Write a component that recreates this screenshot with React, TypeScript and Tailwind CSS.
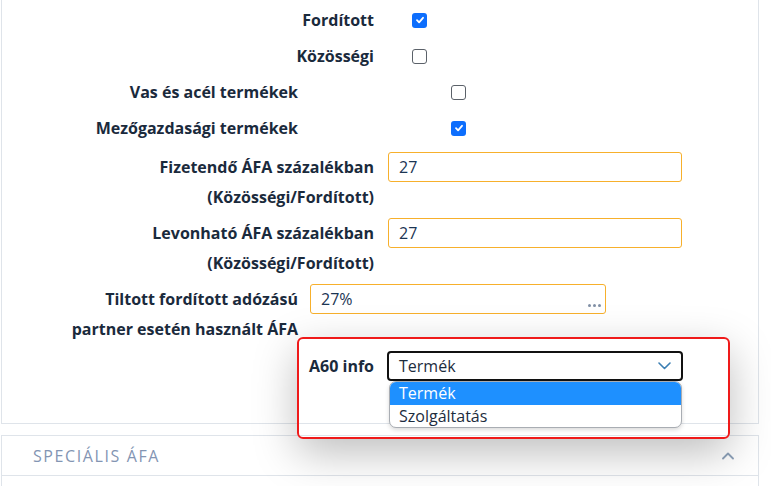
import React from 'react'

const font = { fontFamily: "'Open Sans', 'Noto Sans', sans-serif" }

function Check({ on }: { on: boolean }) {
  if (on) {
    return (
      <span className="w-[15px] h-[15px] rounded-[3px] bg-[#0d6efd] flex items-center justify-center">
        <svg width="10" height="10" viewBox="0 0 10 10" fill="none">
          <path d="M2 5.2 L4.1 7.3 L8 2.8" stroke="white" strokeWidth="1.8" strokeLinecap="round" strokeLinejoin="round" />
        </svg>
      </span>
    )
  }
  return <span className="block w-[15px] h-[15px] rounded-[3px] border border-[#5b6169] bg-white" />
}

function CheckRow({ label, on, wide }: { label: string; on: boolean; wide: boolean }) {
  return (
    <div className="flex items-center h-[36px]">
      <div className={`${wide ? 'w-[372px]' : 'w-[296px]'} text-right text-[16px] font-bold text-[#1a2a3c] leading-[30px]`}>{label}</div>
      <div className={wide ? 'ml-[38px]' : 'ml-[153px]'}>
        <Check on={on} />
      </div>
    </div>
  )
}

function InputRow({ lines, value, wide, dots }: { lines: string[]; value: string; wide: boolean; dots?: boolean }) {
  return (
    <div className="flex items-start">
      <div className={`${wide ? 'w-[372px]' : 'w-[296px]'} text-right text-[16px] font-bold text-[#1a2a3c] leading-[30px]`}>
        {lines.map(l => (
          <div key={l}>{l}</div>
        ))}
      </div>
      <div className={`${wide ? 'ml-[14px] w-[294px]' : 'ml-[12px] w-[296px]'} h-[30px] border border-[#f7b02c] rounded-[3px] flex items-center px-[10px] relative`}>
        <span className="text-[16px] text-[#1b3553]">{value}</span>
        {dots && (
          <span className="absolute right-[4px] bottom-[6px] flex gap-[2px]">
            <span className="w-[3px] h-[3px] rounded-full bg-[#8190a6]" />
            <span className="w-[3px] h-[3px] rounded-full bg-[#8190a6]" />
            <span className="w-[3px] h-[3px] rounded-full bg-[#8190a6]" />
          </span>
        )}
      </div>
    </div>
  )
}

export default function App() {
  return (
    <div className="relative w-[771px] h-[486px] overflow-hidden bg-white" style={font}>
      {/* first card (top cut off) */}
      <div className="ml-px w-[758px] border-x border-b border-[#dfe4ea] pt-[2px] pb-[42px]">
        <CheckRow label="Fordított" on={true} wide={true} />
        <CheckRow label="Közösségi" on={false} wide={true} />
        <CheckRow label="Vas és acél termékek" on={false} wide={false} />
        <CheckRow label="Mezőgazdasági termékek" on={true} wide={false} />
        <div className="mt-[6px] flex flex-col gap-[6px]">
          <InputRow lines={['Fizetendő ÁFA százalékban', '(Közösségi/Fordított)']} value="27" wide={true} />
          <InputRow lines={['Levonható ÁFA százalékban', '(Közösségi/Fordított)']} value="27" wide={true} />
          <InputRow lines={['Tiltott fordított adózású', 'partner esetén használt ÁFA']} value="27%" wide={false} dots />
        </div>
        <div className="mt-[7px] flex items-center h-[30px]">
          <div className="w-[372px] text-right text-[16px] font-bold text-[#1a2a3c]">A60 info</div>
          <div className="ml-[13px] w-[296px] h-[30px] border-2 border-[#111] rounded-[4px] flex items-center justify-between pl-[10px] pr-[10px]">
            <span className="text-[16px] text-[#1c2c3d]">Termék</span>
            <svg width="13" height="8" viewBox="0 0 13 8" fill="none">
              <path d="M1 1 L6.5 6.5 L12 1" stroke="#3b7fb3" strokeWidth="1.6" strokeLinecap="round" strokeLinejoin="round" />
            </svg>
          </div>
        </div>
      </div>

      {/* second card */}
      <div className="ml-px mt-[11px] w-[758px] border border-[#dfe4ea]">
        <div className="h-[40px] border-b border-[#dfe4ea] flex items-center justify-between pl-[31px] pr-[24px]">
          <span className="text-[16px] uppercase tracking-[1.6px] text-[#8395b3]">Speciális ÁFA</span>
          <svg width="12" height="8" viewBox="0 0 12 8" fill="none">
            <path d="M1 6.5 L6 1.5 L11 6.5" stroke="#8ea2ba" strokeWidth="1.8" strokeLinecap="round" strokeLinejoin="round" />
          </svg>
        </div>
        <div className="h-[40px]" />
      </div>

      {/* highlight frame */}
      <div className="absolute left-[297px] top-[337px] w-[433px] h-[102px] border-2 border-[#ef1a1a] rounded-[6px] shadow-[0_14px_44px_rgba(0,0,0,0.26)]" />

      {/* open select list */}
      <div className="absolute left-[389px] top-[381px] w-[293px] h-[47px] bg-white border border-[#a9adb3] rounded-[7px] overflow-hidden shadow-[0_2px_4px_rgba(0,0,0,0.15)]">
        <div className="h-[23px] bg-[#1e90ff] text-white text-[16px] leading-[23px] pl-[9px]">Termék</div>
        <div className="h-[22px] text-[#1c2c3d] text-[16px] leading-[22px] pl-[9px]">Szolgáltatás</div>
      </div>
    </div>
  )
}
